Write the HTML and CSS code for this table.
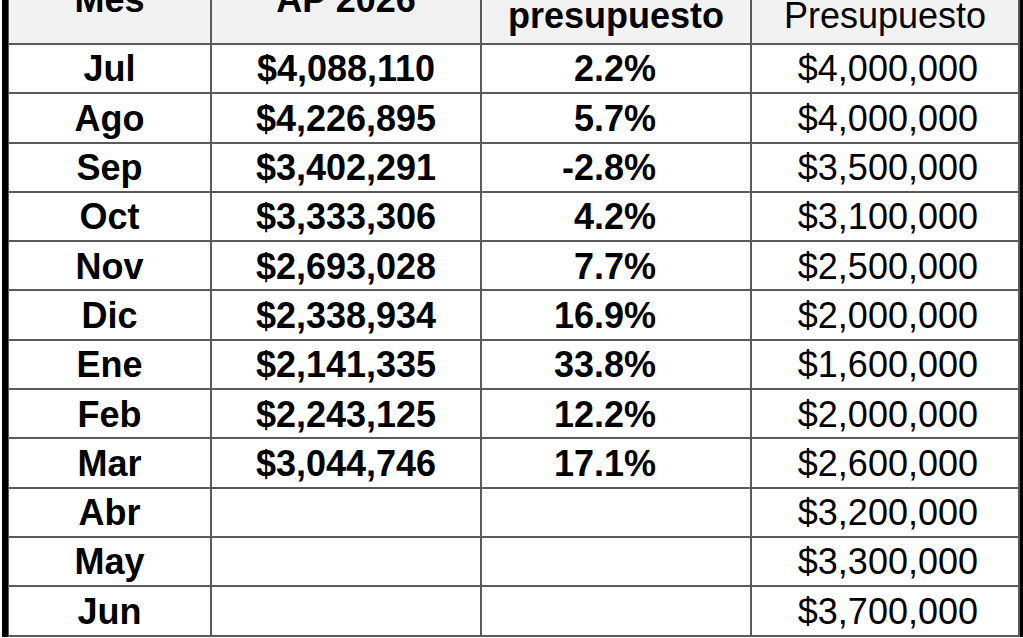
FILE: index.html
```html
<!DOCTYPE html>
<html lang="es">
<head>
<meta charset="utf-8">
<title>Presupuesto</title>
<link rel="stylesheet" href="styles.css">
</head>
<body>
<div class="frame">
  <table class="budget">
    <colgroup>
      <col class="c-mes">
      <col class="c-ap">
      <col class="c-var">
      <col class="c-pre">
    </colgroup>
    <thead>
      <tr>
        <th class="hd-high">Mes</th>
        <th class="hd-high">AP 2026</th>
        <th class="hd-low">presupuesto</th>
        <th class="hd-low hd-regular">Presupuesto</th>
      </tr>
    </thead>
    <tbody>
      <tr><td class="mes">Jul</td><td class="ap">$4,088,110</td><td class="var">2.2%</td><td class="pre">$4,000,000</td></tr>
      <tr><td class="mes">Ago</td><td class="ap">$4,226,895</td><td class="var">5.7%</td><td class="pre">$4,000,000</td></tr>
      <tr><td class="mes">Sep</td><td class="ap">$3,402,291</td><td class="var">-2.8%</td><td class="pre">$3,500,000</td></tr>
      <tr><td class="mes">Oct</td><td class="ap">$3,333,306</td><td class="var">4.2%</td><td class="pre">$3,100,000</td></tr>
      <tr><td class="mes">Nov</td><td class="ap">$2,693,028</td><td class="var">7.7%</td><td class="pre">$2,500,000</td></tr>
      <tr><td class="mes">Dic</td><td class="ap">$2,338,934</td><td class="var">16.9%</td><td class="pre">$2,000,000</td></tr>
      <tr><td class="mes">Ene</td><td class="ap">$2,141,335</td><td class="var">33.8%</td><td class="pre">$1,600,000</td></tr>
      <tr><td class="mes">Feb</td><td class="ap">$2,243,125</td><td class="var">12.2%</td><td class="pre">$2,000,000</td></tr>
      <tr><td class="mes">Mar</td><td class="ap">$3,044,746</td><td class="var">17.1%</td><td class="pre">$2,600,000</td></tr>
      <tr><td class="mes">Abr</td><td class="ap"></td><td class="var"></td><td class="pre">$3,200,000</td></tr>
      <tr><td class="mes">May</td><td class="ap"></td><td class="var"></td><td class="pre">$3,300,000</td></tr>
      <tr><td class="mes">Jun</td><td class="ap"></td><td class="var"></td><td class="pre">$3,700,000</td></tr>
    </tbody>
  </table>
</div>
</body>
</html>
```

FILE: styles.css
```css
html, body {
  margin: 0;
  padding: 0;
  background: #ffffff;
  overflow: hidden;
}

body {
  font-family: "Liberation Sans", Arial, sans-serif;
  color: #000;
}

.frame {
  margin: -40px 0 0 2px;
  width: 1012px;
  border-left: 6px solid #000;
  border-right: 6px solid #000;
}

.budget {
  width: 1012px;
  table-layout: fixed;
  border-collapse: separate;
  border-spacing: 0;
  font-size: 36px;
}

.c-mes { width: 204px; }
.c-ap  { width: 270px; }
.c-var { width: 270px; }
.c-pre { width: 268px; }

.budget th,
.budget td {
  border-right: 2px solid #5a5a5a;
  border-bottom: 2px solid #5a5a5a;
  padding: 0;
  line-height: 1.15;
}

.budget th:first-child,
.budget td:first-child {
  border-left: 1px solid #5a5a5a;
}

.budget th {
  background: #f2f2f2;
  height: 60px;
  vertical-align: bottom;
  text-align: center;
  font-weight: bold;
}

.budget .hd-high { padding-bottom: 23px; }
.budget .hd-low { padding-bottom: 7px; }
.budget .hd-regular { font-weight: normal; }

.budget td {
  height: 46.3px;
  vertical-align: middle;
  padding-top: 1px;
}

.budget .mes {
  font-weight: bold;
  text-align: center;
}

.budget .ap {
  font-weight: bold;
  text-align: center;
}

.budget .var {
  font-weight: bold;
  text-align: right;
  padding-right: 94px;
}

.budget .pre {
  text-align: right;
  padding-right: 40px;
}
```
